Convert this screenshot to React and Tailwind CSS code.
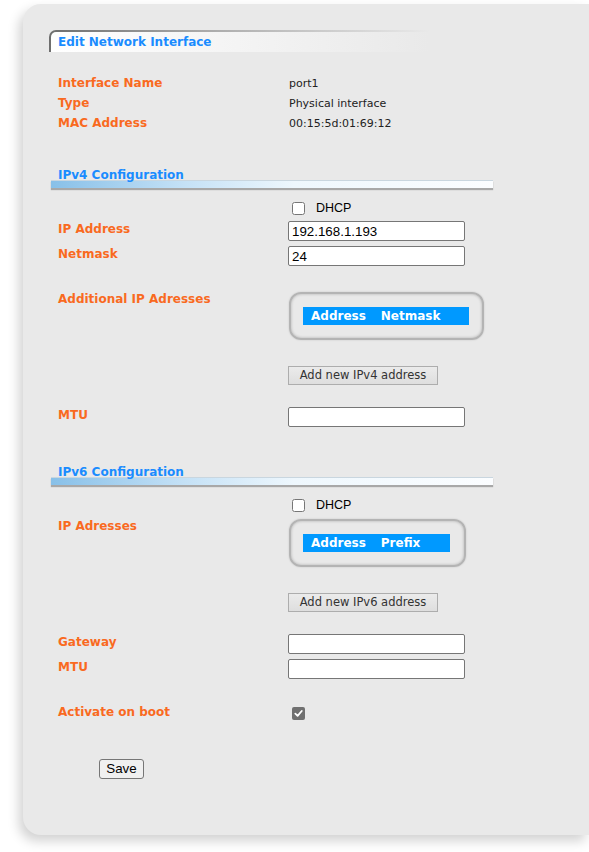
import React from "react";

const SANS = "font-['DejaVu_Sans','Verdana',sans-serif]";
const ARIAL = "font-['Liberation_Sans',Arial,sans-serif]";
const LABEL = `w-[230px] shrink-0 pt-[1px] text-[12px] font-bold leading-[14px] text-[#f96a1f] ${SANS}`;

function Field({ value = "" }) {
  return (
    <input
      readOnly
      value={value}
      className={`h-[20px] w-[177px] rounded-[2px] border border-[#767676] bg-white px-[3px] text-[13.33px] text-black outline-none ${ARIAL}`}
    />
  );
}

function Heading({ children }) {
  return (
    <div className="ml-[28px] w-[442px]">
      <div className={`h-[13px] pl-[7px] text-[12px] font-bold leading-[17px] text-[#1a8cff] ${SANS}`}>{children}</div>
      <div className="h-[8px] border-t border-[#c9d6df] bg-[linear-gradient(to_right,#88c0e8,#c4e1f6_30%,#eef7fd_55%,#fbfdff)] shadow-[0_2px_1px_rgba(0,0,0,0.28)]" />
    </div>
  );
}

function Dhcp({ className }) {
  return (
    <div className={`flex h-[20px] items-center pl-[35px] ${className}`}>
      <div className="w-[230px] shrink-0" />
      <input type="checkbox" readOnly className="m-0 ml-[4px] h-[13px] w-[13px]" />
      <span className={`ml-[11px] text-[12.5px] text-black ${ARIAL}`}>DHCP</span>
    </div>
  );
}

function AddrBox({ width, bar, cols }) {
  return (
    <div
      className={`mt-[1px] h-[48px] rounded-[12px] border-2 border-[#b4b4b4] pl-[12px] pt-[13px] shadow-[inset_0_0_3px_rgba(0,0,0,0.25),0_0_2px_rgba(0,0,0,0.15)] ${width}`}
    >
      <div className={`flex h-[18px] items-center gap-[15px] bg-[#0099ff] pl-[8px] text-[12px] font-bold text-white ${SANS} ${bar}`}>
        {cols.map((c) => (
          <span key={c}>{c}</span>
        ))}
      </div>
    </div>
  );
}

function AddButton({ children, className }) {
  return (
    <div className={`flex pl-[35px] ${className}`}>
      <div className="w-[230px] shrink-0" />
      <button className={`h-[19px] w-[150px] border border-[#adadad] bg-[linear-gradient(#ebebeb,#dedede)] text-[11.5px] leading-[17px] text-[#333] ${SANS}`}>
        {children}
      </button>
    </div>
  );
}

function InputRow({ label, value, className }) {
  return (
    <div className={`flex pl-[35px] ${className}`}>
      <div className={LABEL}>{label}</div>
      <Field value={value} />
    </div>
  );
}

export default function App() {
  return (
    <div className="min-h-[852px] bg-white pt-[4px]">
      <div className="ml-[23px] h-[831px] rounded-l-[18px] bg-[#e9e9e9] pt-[26px] shadow-[-4px_6px_12px_rgba(0,0,0,0.18)]">
        {/* title tab */}
        <div className="ml-[26px] w-[380px] rounded-tl-[7px] bg-[linear-gradient(to_right,#6e6e6e,#a9a9a9_40%,#e9e9e9)] pl-[2px] pt-[2px]">
          <div className="h-[20px] rounded-tl-[5px] bg-[linear-gradient(to_right,#ffffff,#f6f6f6_40%,#e9e9e9)]">
            <div className={`pl-[7px] text-[12px] font-bold leading-[20px] text-[#1a8cff] ${SANS}`}>Edit Network Interface</div>
          </div>
        </div>

        {/* interface info */}
        <div className="mt-[20px] pl-[35px]">
          {[
            ["Interface Name", "port1"],
            ["Type", "Physical interface"],
            ["MAC Address", "00:15:5d:01:69:12"],
          ].map(([k, v]) => (
            <div key={k} className="flex h-[20px]">
              <div className={`w-[230px] shrink-0 pt-[1px] text-[12px] font-bold leading-[20px] text-[#f96a1f] ${SANS}`}>{k}</div>
              <div className={`pl-[1px] pt-[2px] text-[11px] leading-[20px] text-[#222] ${SANS}`}>{v}</div>
            </div>
          ))}
        </div>

        {/* IPv4 */}
        <div className="mt-[35px]">
          <Heading>IPv4 Configuration</Heading>
        </div>
        <Dhcp className="mt-[10px]" />
        <InputRow label="IP Address" value="192.168.1.193" className="mt-[3px]" />
        <InputRow label="Netmask" value="24" className="mt-[5px]" />

        <div className="mt-[25px] flex pl-[35px]">
          <div className={LABEL}>Additional IP Adresses</div>
          <div className="pl-[1px]">
            <AddrBox width="w-[195px]" bar="w-[166px]" cols={["Address", "Netmask"]} />
          </div>
        </div>
        <AddButton className="mt-[26px]">Add new IPv4 address</AddButton>
        <InputRow label="MTU" className="mt-[22px]" />

        {/* IPv6 */}
        <div className="mt-[37px]">
          <Heading>IPv6 Configuration</Heading>
        </div>
        <Dhcp className="mt-[10px]" />
        <div className="mt-[3px] flex pl-[35px]">
          <div className={LABEL}>IP Adresses</div>
          <div className="pl-[1px]">
            <AddrBox width="w-[177px]" bar="w-[147px]" cols={["Address", "Prefix"]} />
          </div>
        </div>
        <AddButton className="mt-[26px]">Add new IPv6 address</AddButton>
        <InputRow label="Gateway" className="mt-[22px]" />
        <InputRow label="MTU" className="mt-[5px]" />

        <div className="mt-[25px] flex pl-[35px]">
          <div className={LABEL}>Activate on boot</div>
          <span className="ml-[4px] mt-[3px] flex h-[13px] w-[13px] items-center justify-center rounded-[2px] bg-[#707070]">
            <svg width="9" height="9" viewBox="0 0 10 10" fill="none">
              <path d="M1.5 5.2 L4 7.6 L8.6 2.2" stroke="white" strokeWidth="2" strokeLinecap="round" strokeLinejoin="round" />
            </svg>
          </span>
        </div>

        <button className={`ml-[76px] mt-[39px] h-[20px] w-[45px] rounded-[3px] border border-[#767676] bg-[#f0f0f0] text-[13.33px] leading-[18px] text-black ${ARIAL}`}>
          Save
        </button>
      </div>
    </div>
  );
}
